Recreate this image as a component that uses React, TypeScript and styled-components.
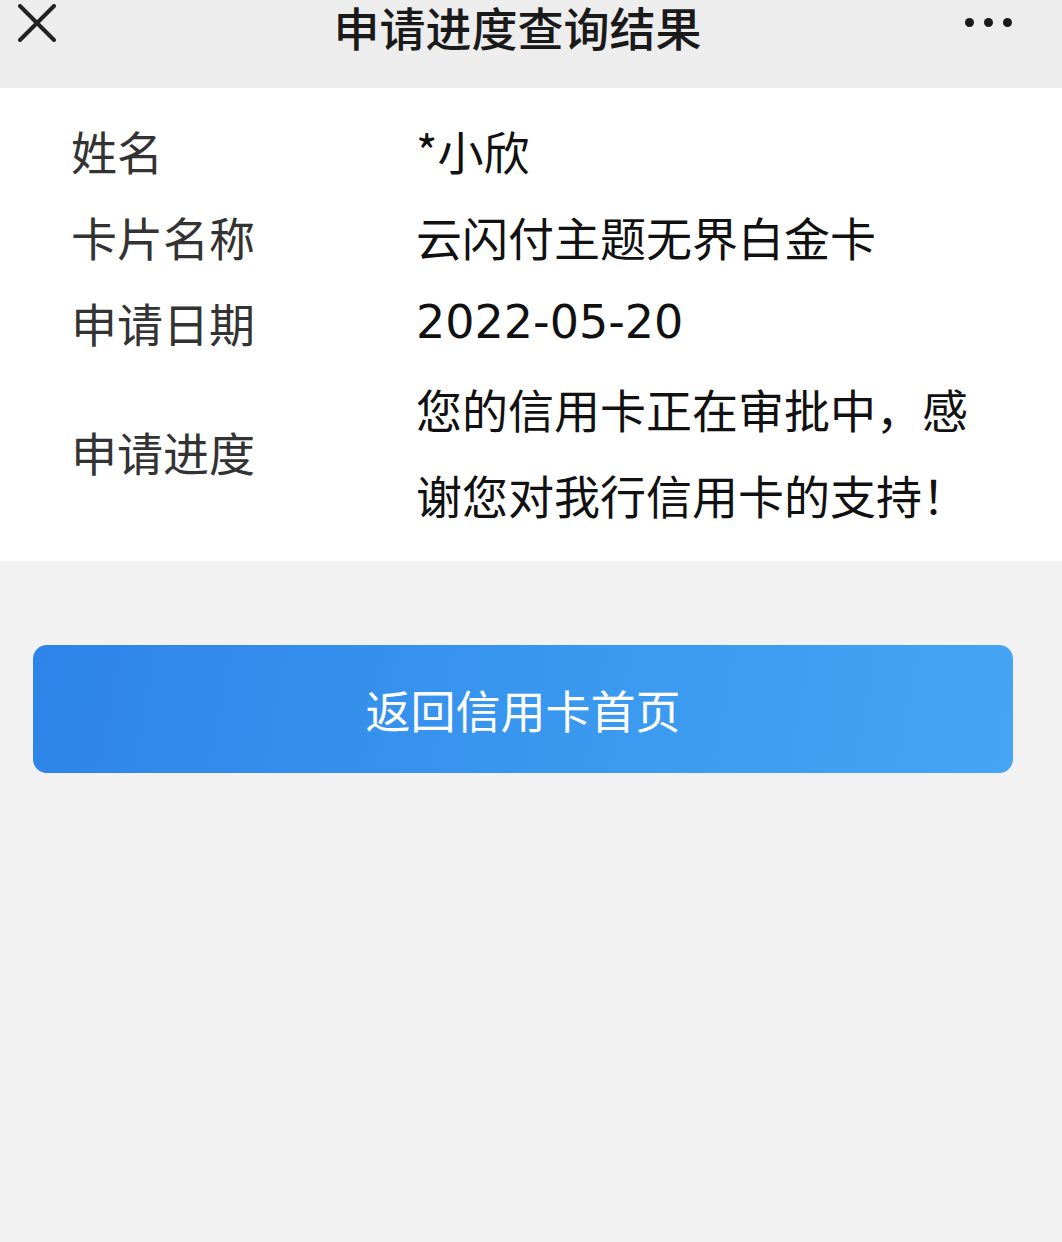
import styled, { createGlobalStyle } from "styled-components";

const GlobalStyle = createGlobalStyle`
  html, body {
    margin: 0;
    padding: 0;
    background: #f2f2f2;
  }
  body {
    font-family: "Noto Sans CJK SC", "Noto Sans", sans-serif;
  }
`;

const rows = [
  { label: "姓名", value: "*小欣" },
  { label: "卡片名称", value: "云闪付主题无界白金卡" },
  { label: "申请日期", value: "2022-05-20", digits: true },
  { label: "申请进度", value: "您的信用卡正在审批中，感谢您对我行信用卡的支持！" },
];

export default function App() {
  return (
    <Page>
      <GlobalStyle />
      <NavBar>
        <CloseBtn type="button" aria-label="关闭">
          <svg width="38" height="38" viewBox="0 0 38 38">
            <path d="M2 2 L36 36 M36 2 L2 36" stroke="#222" strokeWidth="4" strokeLinecap="round" />
          </svg>
        </CloseBtn>
        <NavTitle>申请进度查询结果</NavTitle>
        <MoreBtn type="button" aria-label="更多">
          <Dot />
          <Dot />
          <Dot />
        </MoreBtn>
      </NavBar>
      <InfoPanel>
        {rows.map((row) => (
          <InfoRow key={row.label}>
            <Label>{row.label}</Label>
            <Value $digits={row.digits}>{row.value}</Value>
          </InfoRow>
        ))}
      </InfoPanel>
      <Actions>
        <HomeBtn type="button">返回信用卡首页</HomeBtn>
      </Actions>
    </Page>
  );
}

const Page = styled.div`
  min-height: 100vh;
  background: #f2f2f2;
`;

const NavBar = styled.header`
  height: 88px;
  background: #ededed;
  display: flex;
  align-items: flex-start;
  justify-content: space-between;
  padding: 0 50px 0 18px;
  box-sizing: border-box;
`;

const CloseBtn = styled.button`
  margin-top: 4px;
  padding: 0;
  border: none;
  background: none;
  width: 38px;
  height: 38px;
  cursor: pointer;
`;

const NavTitle = styled.h1`
  margin: 0;
  margin-left: 14px;
  font-size: 46px;
  line-height: 52px;
  font-weight: 500;
  color: #1a1a1a;
`;

const MoreBtn = styled.button`
  margin-top: 18px;
  padding: 0;
  border: none;
  background: none;
  display: flex;
  gap: 10px;
  cursor: pointer;
`;

const Dot = styled.span`
  width: 9px;
  height: 9px;
  border-radius: 50%;
  background: #1a1a1a;
`;

const InfoPanel = styled.section`
  background: #fff;
  padding: 19px 70px 24px 71px;
`;

const InfoRow = styled.div`
  display: grid;
  grid-template-columns: 345px 1fr;
  align-items: center;
  font-size: 46px;
  line-height: 86px;
`;

const Label = styled.div`
  color: #333;
`;

const Value = styled.div<{ $digits?: boolean }>`
  color: #111;
  max-width: 568px;
  font-family: ${(p) =>
    p.$digits ? `"DejaVu Sans", "Noto Sans CJK SC", sans-serif` : `"Noto Sans CJK SC", sans-serif`};
`;

const Actions = styled.div`
  padding: 84px 49px 0 33px;
`;

const HomeBtn = styled.button`
  width: 100%;
  height: 128px;
  border: none;
  border-radius: 14px;
  background: linear-gradient(100deg, #2e84e8 0%, #3a98ef 55%, #45a5f4 100%);
  color: #fff;
  font-family: "Noto Sans CJK SC", sans-serif;
  font-size: 45px;
  line-height: 1;
  cursor: pointer;
  padding: 0;
`;
